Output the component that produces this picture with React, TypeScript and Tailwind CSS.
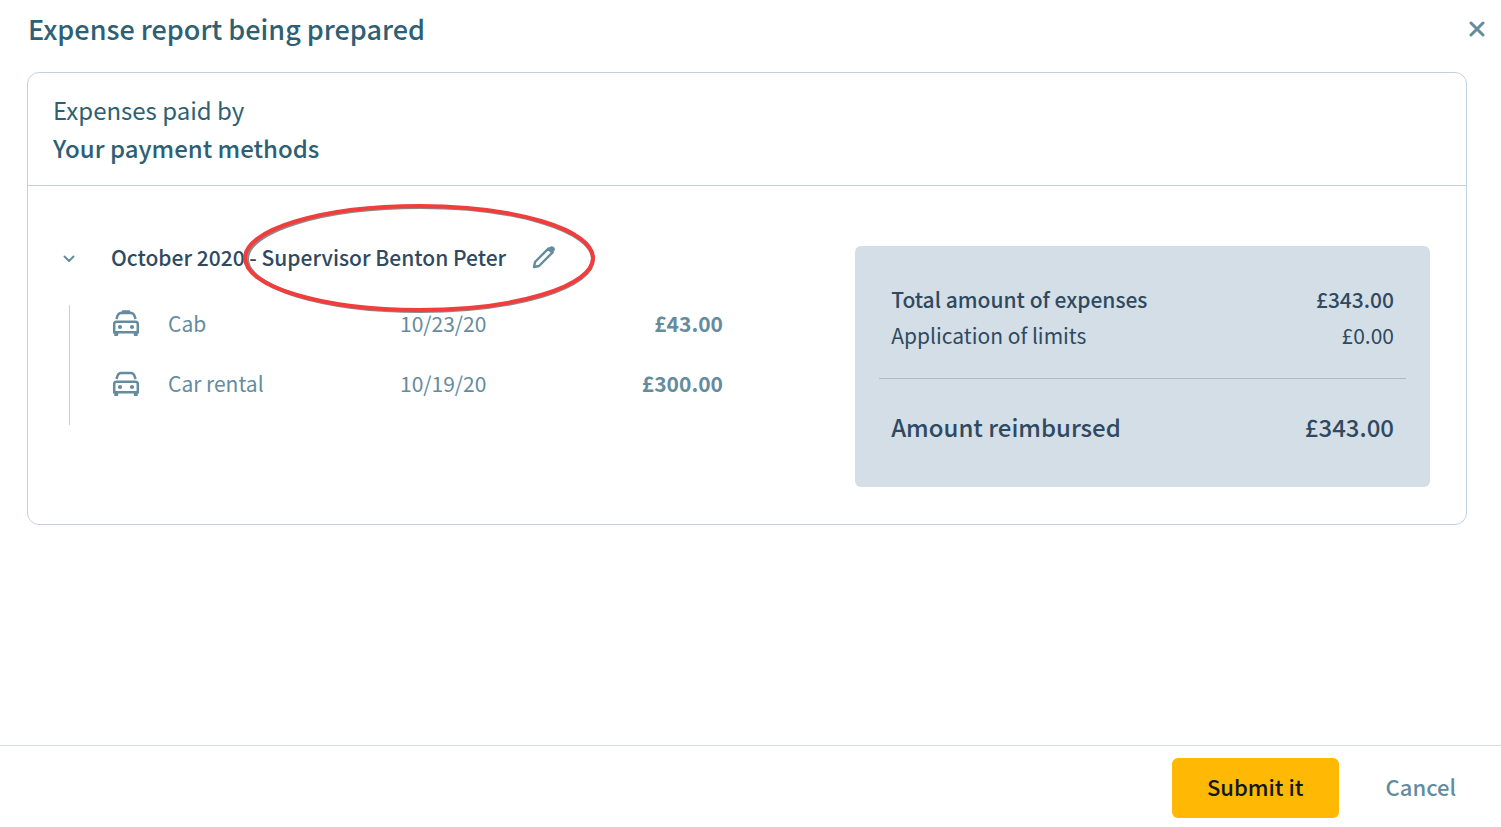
interface Expense {
  id: string;
  label: string;
  date: string;
  amount: number;
  icon: "cab" | "car";
}

const expenses: Expense[] = [
  { id: "cab", label: "Cab", date: "10/23/20", amount: 43, icon: "cab" },
  { id: "rental", label: "Car rental", date: "10/19/20", amount: 300, icon: "car" },
];

const formatAmount = (v: number) => `£${v.toFixed(2)}`;

function CarIcon({ withSign }: { withSign: boolean }) {
  return (
    <svg viewBox="0 0 28 28" className="block size-7" fill="none" stroke="currentColor" strokeWidth="2.5" aria-hidden="true">
      {withSign && <path d="M9 4.5 L9.6 2.4 C9.8 1.6 10.4 1.2 11 1.2 H17 C17.6 1.2 18.2 1.6 18.4 2.4 L19 4.5 Z" fill="currentColor" stroke="none" />}
      <path d="M4.4 10 L5.6 6.6 C6.3 4.6 7.4 3.9 9 3.9 H19 C20.6 3.9 21.7 4.6 22.4 6.6 L23.6 10" />
      <path d="M4.5 12.8 H23.5 C25 12.8 25.8 13.8 25.8 15.2 V23.2 H2.2 V15.2 C2.2 13.8 3 12.8 4.5 12.8 Z" />
      <path d="M2.2 23 H6.2 V26 C6.2 26.6 5.8 27 5.2 27 H3.2 C2.6 27 2.2 26.6 2.2 26 Z M21.8 23 H25.8 V26 C25.8 26.6 25.4 27 24.8 27 H22.8 C22.2 27 21.8 26.6 21.8 26 Z" fill="currentColor" stroke="none" />
      <circle cx="8" cy="18" r="2.1" fill="currentColor" stroke="none" />
      <circle cx="20" cy="18" r="2.1" fill="currentColor" stroke="none" />
    </svg>
  );
}

function PencilIcon() {
  return (
    <svg viewBox="0 0 24 24" className="block size-6" fill="none" stroke="currentColor" strokeWidth="2.4" strokeLinejoin="round" aria-hidden="true">
      <path d="M2 22 L3 17 L16.6 3.4 L20.6 7.4 L7 21 Z" />
      <path d="M15.4 4.4 L18 1.8 C19 0.9 20.6 0.9 21.8 2.1 C23.2 3.3 23.3 4.8 22.4 5.8 L19.6 8.6 Z" fill="currentColor" stroke="none" />
    </svg>
  );
}

function SummaryRow({ label, amount }: { label: string; amount: number }) {
  return (
    <>
      <dt>{label}</dt>
      <dd>{formatAmount(amount)}</dd>
    </>
  );
}

export default function App() {
  const total = expenses.reduce((sum, e) => sum + e.amount, 0);

  return (
    <div className="flex min-h-screen flex-col bg-white font-['Noto_Sans_CJK_SC','Noto_Sans',sans-serif] text-[21px] leading-9 text-[#2f4a60]">
      <header className="flex items-center justify-between pt-[9px] pr-4 pl-7">
        <h1 className="text-[27px] leading-10 font-medium text-[#2e5f74]">Expense report being prepared</h1>
        <button type="button" aria-label="Close" className="text-[#648c9e]">
          <svg viewBox="0 0 16 16" className="block size-4" fill="none" stroke="currentColor" strokeWidth="3" strokeLinecap="round" aria-hidden="true">
            <path d="M2 2 L14 14 M14 2 L2 14" />
          </svg>
        </button>
      </header>

      <main className="flex-1 pt-[23px] pr-[34px] pl-[27px]">
        <section className="rounded-xl border border-[#c3d1df]">
          <div className="border-b border-[#c3d1df] px-[25px] py-[18px] text-2xl leading-[38px] text-[#2e5f74]">
            <p>Expenses paid by</p>
            <h2 className="font-medium">Your payment methods</h2>
          </div>

          <div className="flex justify-between pt-[53px] pr-9 pb-[37px]">
            <div className="w-[51%] shrink-0 pr-5 pl-6">
              <div className="flex items-center">
                <button type="button" aria-label="Collapse October 2020" className="ml-2.5 text-[#648c9e]">
                  <svg viewBox="0 0 14 14" className="block size-3.5" fill="none" stroke="currentColor" strokeWidth="2" strokeLinecap="round" strokeLinejoin="round" aria-hidden="true">
                    <path d="M2.5 6.5 L7 11 L11.5 6.5" />
                  </svg>
                </button>
                <h3 className="ml-[35px] font-medium whitespace-pre">October 2020 </h3>
                <div className="relative flex items-center gap-[26px] whitespace-nowrap">
                  <span className="font-medium">- Supervisor Benton Peter</span>
                  <button type="button" aria-label="Edit supervisor" className="text-[#648c9e]">
                    <PencilIcon />
                  </button>
                  <svg viewBox="0 0 354 110" className="pointer-events-none absolute -top-9 -left-1.5 h-[110px] w-[354px] max-w-none" fill="none" strokeWidth="4" aria-hidden="true">
                    <ellipse cx="177" cy="56" rx="173" ry="52" stroke="#8a8a8a" />
                    <ellipse cx="176" cy="55" rx="174" ry="52" stroke="#f23d3d" />
                  </svg>
                </div>
              </div>

              <div className="mt-[30px] ml-[17px] border-l border-[#c3d1df] pl-[42px] text-[#648c9e]">
                <table className="w-full">
                  <tbody>
                    {expenses.map(e => (
                      <tr key={e.id} className="h-15 align-top">
                        <td className="w-14 pt-1">
                          <CarIcon withSign={e.icon === "cab"} />
                        </td>
                        <td>{e.label}</td>
                        <td className="w-[88px]">{e.date}</td>
                        <td className="w-[235px] text-right font-bold">{formatAmount(e.amount)}</td>
                      </tr>
                    ))}
                  </tbody>
                </table>
              </div>
            </div>

            <aside className="mt-[7px] w-[41%] shrink-0 rounded-md bg-[#d4dee7] px-6 pt-[35px] pb-[41px]">
              <dl>
                <div className="flex justify-between px-3 font-medium">
                  <SummaryRow label="Total amount of expenses" amount={total} />
                </div>
                <div className="flex justify-between px-3">
                  <SummaryRow label="Application of limits" amount={0} />
                </div>
                <div className="mt-[25px] flex justify-between border-t border-[#a6bcd0] px-3 pt-[29px] text-2xl leading-[38px] font-medium">
                  <SummaryRow label="Amount reimbursed" amount={total} />
                </div>
              </dl>
            </aside>
          </div>
        </section>
      </main>

      <footer className="flex justify-end gap-3 border-t border-[#d3dfe3] pt-3 pr-2.5 pb-[9px] text-[22px] font-medium">
        <button type="button" className="h-15 rounded-md bg-[#ffb803] px-[35px] pb-1 text-[#10181f]">Submit it</button>
        <button type="button" className="h-15 px-[35px] pb-1 text-[#648c9e]">Cancel</button>
      </footer>
    </div>
  );
}
